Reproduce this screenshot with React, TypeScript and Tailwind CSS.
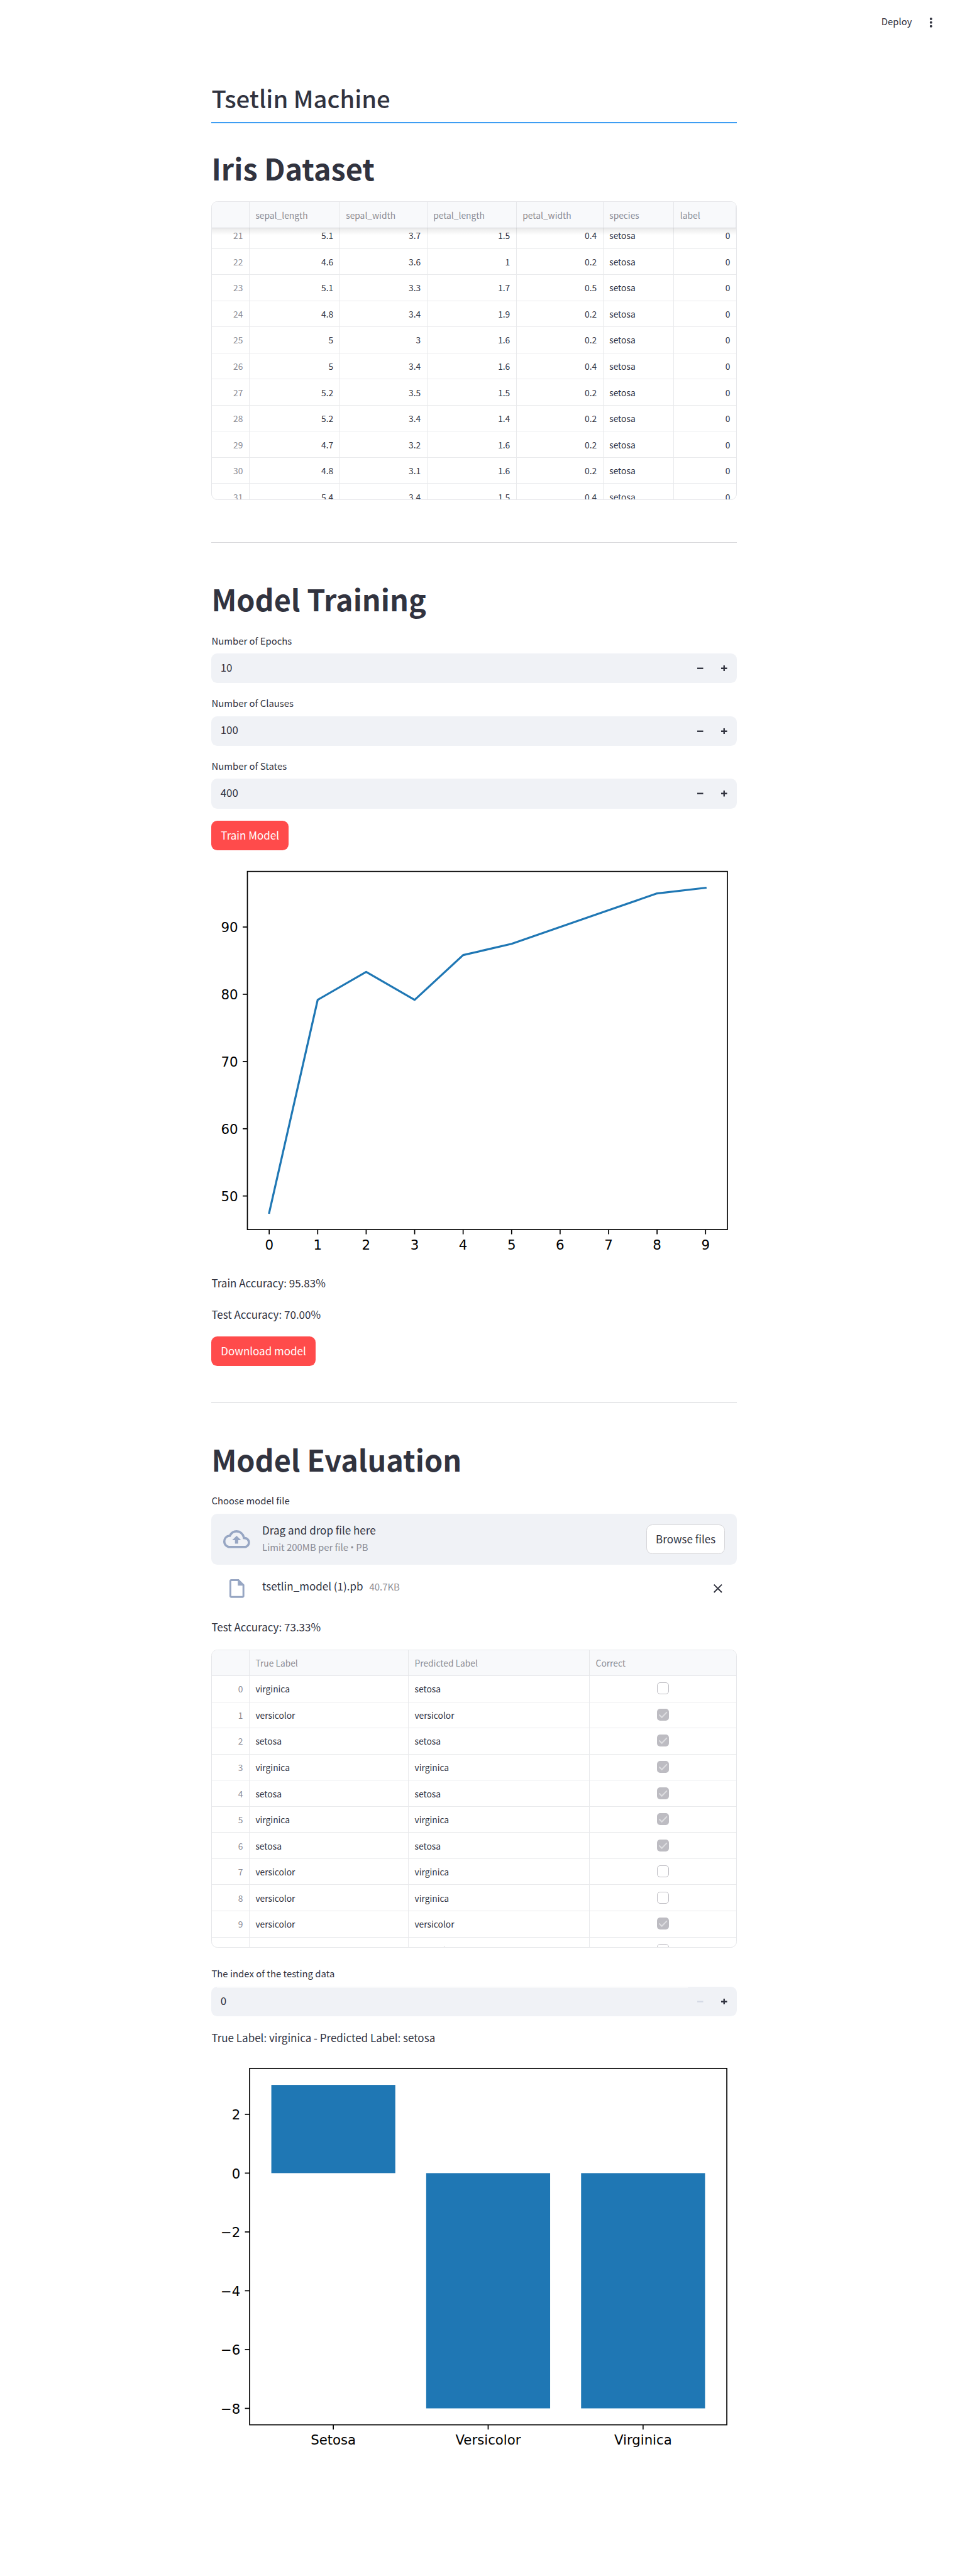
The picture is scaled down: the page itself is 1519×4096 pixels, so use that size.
import type { ReactNode } from "react";
import { MdClose, MdMoreVert, MdOutlineInsertDriveFile } from "react-icons/md";

const irisColumns = ["", "sepal_length", "sepal_width", "petal_length", "petal_width", "species", "label"];

const irisRows: string[][] = [
  ["21", "5.1", "3.7", "1.5", "0.4", "setosa", "0"],
  ["22", "4.6", "3.6", "1", "0.2", "setosa", "0"],
  ["23", "5.1", "3.3", "1.7", "0.5", "setosa", "0"],
  ["24", "4.8", "3.4", "1.9", "0.2", "setosa", "0"],
  ["25", "5", "3", "1.6", "0.2", "setosa", "0"],
  ["26", "5", "3.4", "1.6", "0.4", "setosa", "0"],
  ["27", "5.2", "3.5", "1.5", "0.2", "setosa", "0"],
  ["28", "5.2", "3.4", "1.4", "0.2", "setosa", "0"],
  ["29", "4.7", "3.2", "1.6", "0.2", "setosa", "0"],
  ["30", "4.8", "3.1", "1.6", "0.2", "setosa", "0"],
  ["31", "5.4", "3.4", "1.5", "0.4", "setosa", "0"],
];

const evalColumns = ["", "True Label", "Predicted Label", "Correct"];

const evalRows: [string, string][] = [
  ["virginica", "setosa"],
  ["versicolor", "versicolor"],
  ["setosa", "setosa"],
  ["virginica", "virginica"],
  ["setosa", "setosa"],
  ["virginica", "virginica"],
  ["setosa", "setosa"],
  ["versicolor", "virginica"],
  ["versicolor", "virginica"],
  ["versicolor", "versicolor"],
  ["virginica", "versicolor"],
];

const accuracy = [47.5, 79.17, 83.33, 79.17, 85.83, 87.5, 90, 92.5, 95, 95.83];

const irisGrid = "grid grid-cols-[59.5px_143.8px_139px_142.1px_137.9px_112.7px_1fr]";
const evalGrid = "grid grid-cols-[59.5px_253.1px_288.1px_1fr]";

function TableFrame({ children }: { children: ReactNode }) {
  return (
    <div className="h-[474.8px] overflow-hidden rounded-[9.5px] border border-[#e6e7ea] text-[13.8px] leading-5">
      {children}
    </div>
  );
}

function HeaderRow({ columns, grid, scrolled }: { columns: string[]; grid: string; scrolled?: boolean }) {
  return (
    <div
      className={`${grid} relative z-10 h-[41.5px] border-b bg-[#f8f9fb] text-[#8b8c94] ${
        scrolled ? "border-[#cfd0d4]" : "border-[#e4e5e8]"
      }`}
    >
      {columns.map((name) => (
        <div key={name} className="flex items-center border-r border-[#e6e7ea] pl-[9.5px] last:border-r-0">
          {name}
        </div>
      ))}
      {scrolled && (
        <div className="absolute inset-x-0 top-full mt-px h-[11px] bg-linear-to-b from-black/8 to-transparent" />
      )}
    </div>
  );
}

const rowClass = "h-[41.55px] border-b border-[#e9eaec]";
const cellClass = "flex items-center border-r border-[#e9eaec] px-[9.5px] last:border-r-0";

function IrisTable() {
  return (
    <TableFrame>
      <HeaderRow columns={irisColumns} grid={irisGrid} scrolled />
      <div className="-mt-[8.9px]">
        {irisRows.map((row) => (
          <div key={row[0]} className={`${irisGrid} ${rowClass}`}>
            {row.map((value, i) => (
              <div
                key={i}
                className={`${cellClass} ${i === 5 ? "" : "justify-end"} ${i === 0 ? "text-[#8b8c94]" : ""}`}
              >
                {value}
              </div>
            ))}
          </div>
        ))}
      </div>
    </TableFrame>
  );
}

function Checkbox({ checked }: { checked: boolean }) {
  if (!checked) {
    return <div className="mb-px size-[19px] rounded-[5px] border border-[#bdbcc2] bg-white" />;
  }
  return (
    <div className="mb-px size-[19px] rounded-[5px] bg-[#bdbcc2]">
      <svg viewBox="0 0 24 24" className="size-[19px]" fill="none" stroke="#dddde0" strokeWidth="2.6">
        <path d="M5 12.6 9.7 17.4 19.3 7.4" strokeLinecap="round" />
      </svg>
    </div>
  );
}

function EvaluationTable() {
  return (
    <TableFrame>
      <HeaderRow columns={evalColumns} grid={evalGrid} />
      {evalRows.map(([actual, predicted], i) => (
        <div key={i} className={`${evalGrid} ${rowClass}`}>
          <div className={`${cellClass} justify-end text-[#8b8c94]`}>{i}</div>
          <div className={cellClass}>{actual}</div>
          <div className={cellClass}>{predicted}</div>
          <div className={`${cellClass} justify-center`}>
            <Checkbox checked={actual === predicted} />
          </div>
        </div>
      ))}
    </TableFrame>
  );
}

function NumberInput({ label, value, atMinimum }: { label: string; value: string; atMinimum?: boolean }) {
  return (
    <div>
      <div className="h-[18px] text-[14.88px] leading-[18px]">{label}</div>
      <div className="relative mt-[11.4px] flex h-[47.5px] items-center rounded-[9.5px] bg-[#f0f2f6]">
        {atMinimum && <div className="absolute top-px left-[9px] h-px w-[749px] bg-[#fbfbfc]" />}
        <div className="flex-1 pb-1 pl-[14.3px] text-[17px] leading-[30px]">{value}</div>
        <button className="flex w-[38px] justify-center">
          <svg viewBox="0 0 8 8" className="size-[9.5px]" fill={atMinimum ? "#d5dae5" : "#31333f"}>
            <path d="M0 3v2h8v-2h-8z" />
          </svg>
        </button>
        <button className="mr-px flex w-[38px] justify-center">
          <svg viewBox="0 0 8 8" className="size-[9.5px]" fill="#31333f">
            <path d="M3 0v3h-3v2h3v3h2v-3h3v-2h-3v-3h-2z" />
          </svg>
        </button>
      </div>
    </div>
  );
}

function Heading({ children }: { children: ReactNode }) {
  return <h1 className="h-14 text-[46.76px] leading-[56px] font-bold">{children}</h1>;
}

function CloudUploadIcon() {
  return (
    <svg viewBox="0 0 24 24" className="size-[42.7px]" fill="#97a6c3">
      <path d="M19.35 10.04A7.49 7.49 0 0 0 12 4C9.11 4 6.6 5.64 5.35 8.04A5.994 5.994 0 0 0 0 14c0 3.31 2.69 6 6 6h13c2.76 0 5-2.24 5-5 0-2.64-2.05-4.78-4.65-4.96zM19 18H6c-2.21 0-4-1.79-4-4 0-2.05 1.53-3.76 3.56-3.97l1.07-.11.5-.95A5.469 5.469 0 0 1 12 6c2.62 0 4.88 1.86 5.39 4.43l.3 1.5 1.53.11A2.98 2.98 0 0 1 22 15c0 1.65-1.35 3-3 3zM8 13h2.55v3h2.9v-3H16l-4-4z" />
    </svg>
  );
}

const frameProps = { fill: "none", stroke: "#000", strokeWidth: 2.16 };
const chartClass = "block h-[633px] w-[835.5px] font-['DejaVu_Sans',sans-serif]";

function AccuracyChart() {
  const x = (epoch: number) => 116.5 + epoch * 97.47;
  const y = (value: number) => 130.2 + (90 - value) * 13.513;
  const points = accuracy.map((v, i) => `${x(i)},${y(v)}`).join(" ");
  return (
    <svg viewBox="0 0 1056 800" className={chartClass} fontSize="27">
      <rect x="72.7" y="18.5" width="964.9" height="719.7" {...frameProps} />
      {[90, 80, 70, 60, 50].map((v) => (
        <g key={v}>
          <line x1="63.2" x2="72.7" y1={y(v)} y2={y(v)} {...frameProps} />
          <text x="53.8" y={y(v) + 10.6} textAnchor="end">
            {v}
          </text>
        </g>
      ))}
      {accuracy.map((_, i) => (
        <g key={i}>
          <line x1={x(i)} x2={x(i)} y1="738.2" y2="747.7" {...frameProps} />
          <text x={x(i)} y="778" textAnchor="middle">
            {i}
          </text>
        </g>
      ))}
      <polyline
        points={points}
        fill="none"
        stroke="#1f77b4"
        strokeWidth="4.05"
        strokeLinejoin="round"
        strokeLinecap="square"
      />
    </svg>
  );
}

function VotesChart() {
  const y = (value: number) => 230.5 - value * 59.1;
  const bars = [
    { name: "Setosa", value: 3, center: 245.4 },
    { name: "Versicolor", value: -8, center: 556.7 },
    { name: "Virginica", value: -8, center: 868.1 },
  ];
  return (
    <svg viewBox="0 0 1056 800" className={chartClass} fontSize="26.86">
      {bars.map((bar) => (
        <g key={bar.name}>
          <rect
            x={bar.center - 124.6}
            y={Math.min(y(0), y(bar.value))}
            width="249.2"
            height={Math.abs(y(bar.value) - y(0))}
            fill="#1f77b4"
          />
          <line x1={bar.center} x2={bar.center} y1="736.3" y2="745.8" {...frameProps} />
          <text x={bar.center} y="776.5" textAnchor="middle">
            {bar.name}
          </text>
        </g>
      ))}
      <rect x="77.2" y="20" width="959.3" height="716.3" {...frameProps} />
      {[2, 0, -2, -4, -6, -8].map((v) => (
        <g key={v}>
          <line x1="67.7" x2="77.2" y1={y(v)} y2={y(v)} {...frameProps} />
          <text x="58.4" y={y(v) + 10.6} textAnchor="end">
            {String(v).replace("-", "\u2212")}
          </text>
        </g>
      ))}
    </svg>
  );
}

export default function App() {
  return (
    <div className="min-h-[4096px] bg-white font-['Noto_Sans_CJK_SC',sans-serif] text-[#31333f]">
      <header className="flex h-[71.2px] items-center justify-end gap-[18.5px] pr-[26.4px]">
        <span className="pb-[3.4px] text-[14.88px] leading-5">Deploy</span>
        <MdMoreVert className="size-[23.7px]" />
      </header>

      <main className="ml-[336.4px] flex w-[835.5px] flex-col">
        <div className="mt-[65.6px] border-b-2 border-[#3d9df3] pb-[19.2px] text-[38.26px] leading-[38px] font-medium">
          Tsetlin Machine
        </div>

        <div className="mt-[42.8px]">
          <Heading>Iris Dataset</Heading>
        </div>
        <div className="mt-[25.6px]">
          <IrisTable />
        </div>

        <hr className="mt-[66.7px] border-[#d5d6d9]" />

        <div className="mt-[61.4px]">
          <Heading>Model Training</Heading>
        </div>
        <div className="mt-[29.3px] flex flex-col gap-[22.8px]">
          <NumberInput label="Number of Epochs" value="10" />
          <NumberInput label="Number of Clauses" value="100" />
          <NumberInput label="Number of States" value="400" />
        </div>
        <button className="mt-[19px] flex h-[47.5px] w-[122.7px] items-center justify-center rounded-[9.5px] bg-[#ff4b4b] pb-[2px] text-[17px] whitespace-nowrap text-white">
          Train Model
        </button>
        <div className="mt-[19px]">
          <AccuracyChart />
        </div>
        <p className="mt-[20.4px] text-[17px] leading-[30.4px]">Train Accuracy: 95.83%</p>
        <p className="mt-[19.5px] text-[17px] leading-[30.4px]">Test Accuracy: 70.00%</p>
        <button className="mt-[19.6px] flex h-[47.5px] w-[165.4px] items-center justify-center rounded-[9.5px] bg-[#ff4b4b] pb-[2px] text-[17px] whitespace-nowrap text-white">
          Download model
        </button>

        <hr className="mt-[57.8px] border-[#d5d6d9]" />

        <div className="mt-[61.1px]">
          <Heading>Model Evaluation</Heading>
        </div>
        <div className="mt-[29.4px] h-[18px] text-[14.88px] leading-[18px]">Choose model file</div>
        <div className="mt-[11.8px] flex h-[80.4px] items-center rounded-[9.5px] bg-[#f0f2f6] px-[19px]">
          <CloudUploadIcon />
          <div className="ml-[19px] flex-1 pb-[3.6px]">
            <div className="text-[17px] leading-[30.4px]">Drag and drop file here</div>
            <div className="h-[24.8px] text-[14.88px] leading-[24.8px] text-[#8b8c94]">
              Limit 200MB per file <span className="font-['Open_Sans',sans-serif] leading-none">•</span> PB
            </div>
          </div>
          <button className="flex h-[47.5px] w-[124.6px] items-center justify-center rounded-[9.5px] border border-[#d6d6d9] bg-white pb-[2px] text-[17px] whitespace-nowrap">
            Browse files
          </button>
        </div>
        <div className="mt-5 flex h-9 items-center pr-[18.5px] pl-[22.8px]">
          <MdOutlineInsertDriveFile className="size-[35.6px] text-[#97a6c3]" />
          <div className="ml-[22.2px] flex flex-1 items-baseline gap-[10px] pb-[6.4px] leading-[30.4px]">
            <span className="text-[17px]">tsetlin_model (1).pb</span>
            <span className="text-[14.88px] text-[#8b8c94]">40.7KB</span>
          </div>
          <MdClose className="size-[23.7px]" />
        </div>
        <p className="mt-[28.7px] text-[17px] leading-[30.4px]">Test Accuracy: 73.33%</p>
        <div className="mt-[19.9px]">
          <EvaluationTable />
        </div>
        <div className="mt-[32.1px]">
          <NumberInput label="The index of the testing data" value="0" atMinimum />
        </div>
        <p className="mt-[18.2px] text-[17px] leading-[30.4px]">
          True Label: virginica - Predicted Label: setosa
        </p>
        <div className="mt-[18.3px]">
          <VotesChart />
        </div>
      </main>
    </div>
  );
}
